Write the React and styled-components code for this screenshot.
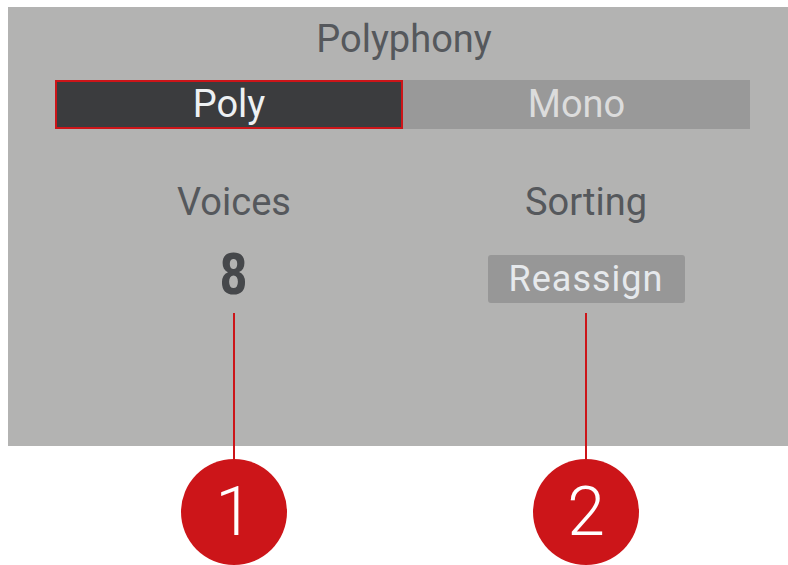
import React from 'react'
import styled, { createGlobalStyle } from 'styled-components'

const red = '#cc1519';
const panelGray = '#b3b3b2';
const labelColor = '#55585c';

const GlobalStyle = createGlobalStyle`
  html, body {
    margin: 0;
    padding: 0;
    background: #ffffff;
    overflow: hidden;
  }
  body {
    font-family: Roboto, "Liberation Sans", sans-serif;
  }
`
const Page = styled.div`
  width: 788px;
  height: 565px;
  padding-top: 7px;
  padding-left: 8px;
  box-sizing: border-box;
`
const Panel = styled.div`
  width: 780px;
  height: 439px;
  background: ${panelGray};
  padding-top: 10px;
  box-sizing: border-box;
`
const Title = styled.div`
  font-size: 38px;
  line-height: 44px;
  color: ${labelColor};
  text-align: center;
  padding-left: 12px;
`
const Segments = styled.div`
  display: grid;
  grid-template-columns: 348px 347px;
  margin: 19px 0 0 47px;
  width: 695px;
  height: 49px;
`
const Segment = styled.div`
  box-sizing: border-box;
  background: ${p => p.$active ? '#3b3c3e' : '#999999'};
  border: ${p => p.$active ? `2px solid ${red}` : 'none'};
  color: ${p => p.$active ? '#eef1f3' : '#dcdcdc'};
  font-size: 38px;
  line-height: ${p => p.$active ? '45px' : '49px'};
  text-align: center;
`
const Columns = styled.div`
  display: grid;
  grid-template-columns: 352px 352px;
  margin: 51px 0 0 50px;
`
const Column = styled.div`
  display: flex;
  flex-direction: column;
  align-items: center;
`
const Label = styled.div`
  font-size: 38px;
  line-height: 44px;
  color: ${labelColor};
`
const Slot = styled.div`
  height: 48px;
  margin-top: 31px;
  display: flex;
  align-items: flex-start;
`
const Value = styled.div`
  font-family: "DejaVu Sans Condensed", "DejaVu Sans", sans-serif;
  font-weight: 700;
  font-size: 56px;
  line-height: 38px;
  color: #46484b;
  transform: scaleX(0.8);
`
const Button = styled.div`
  box-sizing: border-box;
  width: 197px;
  height: 48px;
  border-radius: 3px;
  background: #979797;
  color: #e6e9ec;
  font-size: 36px;
  line-height: 48px;
  letter-spacing: 1px;
  text-align: center;
`
const Stem = styled.div`
  width: 2px;
  height: 146px;
  margin-top: 10px;
  background: ${red};
`
const Badge = styled.div`
  width: 106px;
  height: 106px;
  border-radius: 50%;
  background: ${red};
  color: #ffffff;
  font-size: 68px;
  font-weight: 300;
  line-height: 106px;
  text-align: center;
`

const App = () =>
  <Page>
    <GlobalStyle />
    <Panel>
      <Title>Polyphony</Title>
      <Segments>
        <Segment $active>Poly</Segment>
        <Segment>Mono</Segment>
      </Segments>
      <Columns>
        <Column>
          <Label>Voices</Label>
          <Slot><Value>8</Value></Slot>
          <Stem />
          <Badge>1</Badge>
        </Column>
        <Column>
          <Label>Sorting</Label>
          <Slot><Button>Reassign</Button></Slot>
          <Stem />
          <Badge>2</Badge>
        </Column>
      </Columns>
    </Panel>
  </Page>

export default App
